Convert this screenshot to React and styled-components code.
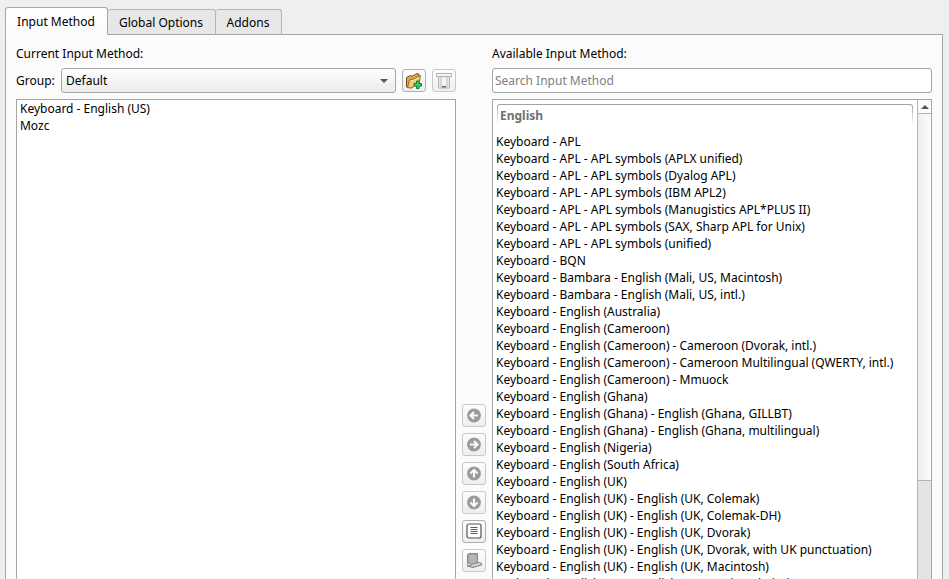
import React from 'react';
import styled, { createGlobalStyle } from 'styled-components';

const Global = createGlobalStyle`
  * { box-sizing: border-box; }
  html, body { margin: 0; height: 100%; overflow: hidden; background: #efefef; }
  body { font: 12px/17px "Noto Sans", sans-serif; color: #000; }
`;
const Window = styled.main`
  width: 949px; height: 579px; padding: 7px 6px 0 5px; overflow: hidden;
  display: flex; flex-direction: column; background: #efefef;
`;
const TabBar = styled.div`
  display: flex; align-items: flex-end; height: 28px; margin-bottom: -1px; z-index: 1;
`;
const Tab = styled.div`
  width: ${p => p.$w}px; height: ${p => (p.$active ? 28 : 26)}px;
  border: 1px solid ${p => (p.$active ? '#a6a6a6' : '#b4b4b4')};
  border-bottom-color: ${p => (p.$active ? '#fbfbfb' : '#a6a6a6')};
  border-left-width: ${p => (p.$active ? 1 : 0)}px;
  border-radius: 3px 3px 0 0;
  background: ${p => (p.$active ? 'linear-gradient(#fff, #fbfbfb)' : '#e7e7e7')};
  padding: ${p => (p.$active ? 5 : 4)}px 1px 0 0;
  text-align: center; white-space: nowrap;
`;
const Pane = styled.section`
  flex: 1; min-height: 0; border: 1px solid #a6a6a6; border-bottom: 0; background: #fbfbfb;
  padding: 10px 10px 0; display: grid; grid-template-columns: 440px 36px 440px;
`;
const Column = styled.div`
  display: flex; flex-direction: column; min-height: 0;
`;
const Label = styled.div`
  height: 17px; white-space: nowrap; margin-bottom: ${p => p.$gap || 0}px;
`;
const GroupRow = styled.div`
  display: flex; align-items: center; height: 25px; margin-bottom: 6px;
`;
const GroupLabel = styled.div`
  width: 45px;
`;
const Combo = styled.div`
  width: 335px; height: 25px; border: 1px solid #a6a6a6; border-radius: 3px;
  background: linear-gradient(#fefefe, #ebebeb); padding: 0 7px 0 4px; margin-right: 6px;
  display: flex; align-items: center; justify-content: space-between;
`;
const ToolButton = styled.div`
  width: 24px; height: 23px; margin-right: ${p => p.$gap || 0}px;
  border: 1px solid ${p => (p.$off ? '#c9c9c9' : '#b0b0b0')}; border-radius: 3px;
  background: linear-gradient(#fdfdfd, #eeeeee);
  display: flex; align-items: center; justify-content: center;
  svg { display: block; flex: none; }
`;
const Search = styled.div`
  height: 25px; border: 1px solid #a6a6a6; border-radius: 3px; background: #fff;
  padding: 3px 2px; color: #808080; margin-bottom: 6px;
`;
const ListBox = styled.div`
  flex: 1; min-height: 0; border: 1px solid #a6a6a6; border-bottom: 0; background: #fff;
  overflow: hidden; display: flex;
`;
const Items = styled.div`
  flex: 1; min-width: 0; overflow: hidden; padding-top: ${p => p.$top || 0}px;
`;
const Item = styled.div`
  height: 17px; padding-left: 3px; white-space: nowrap; letter-spacing: -0.01px;
`;
const Heading = styled.div`
  margin: 0 4px 8px; height: 21px; border-radius: 3px 3px 0 0; padding: 1px;
  background: linear-gradient(#a0a0a0, #fff);
`;
const HeadingText = styled.div`
  height: 20px; border-radius: 2px 2px 0 0; background: #fff; padding: 2px 0 0 2px;
  font-weight: 700; color: #707070;
`;
const Actions = styled.div`
  padding: 359px 0 0 6px; display: flex; flex-direction: column; gap: 6px;
`;
const Scrollbar = styled.div`
  width: 14px; border-left: 1px solid #b4b4b4; background: #e4e4e4;
  display: flex; flex-direction: column;
`;
const ScrollUp = styled.div`
  height: 14px; border-bottom: 1px solid #b4b4b4; background: #fbfbfb;
  display: flex; justify-content: center; align-items: center;
`;
const Thumb = styled.div`
  height: 367px; border-bottom: 1px solid #b4b4b4;
  background: linear-gradient(90deg, #eeeeee, #fcfcfc);
`;

const Folder = () => (
  <svg width="18" height="18" viewBox="0 0 18 18">
    <path d="M1.500 5.500 5.500 3.500l1.500.8L12 1.500l2 .8V11l-8 5-4.500-1z" fill="#d8a54a" stroke="#76541b" />
    <path d="M2.500 15.500 4.500 8l3.500-.5 7.500-4-1.500 8L6 16z" fill="#f4ca76" stroke="#8a6425" strokeWidth=".9" />
    <path d="m5.300 8.800 3-.5 6-3" fill="none" stroke="#fde6ae" />
    <path d="M11.500 9h2.500v2.500h2.500V14H14v2.500h-2.500V14H9v-2.500h2.500z" fill="#3ed06a" stroke="#157a35" />
  </svg>
);
const Bin = () => (
  <svg width="18" height="18" viewBox="0 0 18 18">
    <path d="M3.500 4.500h11v11.500h-11z" fill="#e9e9e9" stroke="#b4b4b4" />
    <path d="M1.500 1.500h15v3h-15z" fill="#f4f4f4" stroke="#b0b0b0" />
    <path d="M6 5v10M12 5v10" stroke="#c4c4c4" />
    <path d="M7.500 5.500h3v8h-3z" fill="#f7f7f7" />
    <path d="M7 14h4v1.500H7z" fill="#666" />
  </svg>
);
const Arrow = ({ angle }) => (
  <svg width="16" height="16" viewBox="0 0 16 16">
    <circle cx="8" cy="7.500" r="6.900" fill="#9b9b9b" />
    <path transform={`rotate(${angle} 8 7.500)`} d="M12 7.500H4.800M8 3.900 4.400 7.500 8 11.100" fill="none" stroke="#fafafa" strokeWidth="2.100" />
  </svg>
);
const Document = () => (
  <svg width="16" height="17" viewBox="0 0 16 17">
    <rect x="1" y="1" width="14" height="14" rx="2" fill="#fff" stroke="#555" strokeWidth="1.200" />
    <path d="M4.500 4.500h7M4.500 6.500h7M4.500 8.500h7M4.500 10.500h7" stroke="#5c5c5c" />
  </svg>
);
const Keyboard = () => (
  <svg width="18" height="18" viewBox="0 0 18 18">
    <path d="M2.500 2.500 4 1.500h8.500v10l-1.500 3H2.500z" fill="#a2a2a2" stroke="#8b8b8b" />
    <path d="M4.500 3h7v8h-7z" fill="#b5b5b5" />
    <path d="M2.500 12.500h5" stroke="#ddd" />
    <path d="M5 13 14 10.500l2.500.8v1.700L8 15.500 5 14.800z" fill="#c2c2c2" stroke="#858585" />
    <path d="m7 13.500 8-2" stroke="#e4e4e4" />
  </svg>
);

const available = [
  'APL', 'APL - APL symbols (APLX unified)', 'APL - APL symbols (Dyalog APL)',
  'APL - APL symbols (IBM APL2)', 'APL - APL symbols (Manugistics APL*PLUS II)',
  'APL - APL symbols (SAX, Sharp APL for Unix)', 'APL - APL symbols (unified)', 'BQN',
  'Bambara - English (Mali, US, Macintosh)', 'Bambara - English (Mali, US, intl.)',
  'English (Australia)', 'English (Cameroon)', 'English (Cameroon) - Cameroon (Dvorak, intl.)',
  'English (Cameroon) - Cameroon Multilingual (QWERTY, intl.)', 'English (Cameroon) - Mmuock',
  'English (Ghana)', 'English (Ghana) - English (Ghana, GILLBT)',
  'English (Ghana) - English (Ghana, multilingual)', 'English (Nigeria)',
  'English (South Africa)', 'English (UK)', 'English (UK) - English (UK, Colemak)',
  'English (UK) - English (UK, Colemak-DH)', 'English (UK) - English (UK, Dvorak)',
  'English (UK) - English (UK, Dvorak, with UK punctuation)',
  'English (UK) - English (UK, Macintosh)', 'English (UK) - English (UK, Macintosh, intl.)',
];

export default function App() {
  return (
    <Window>
      <Global />
      <TabBar>
        <Tab $active $w={103}>Input Method</Tab>
        <Tab $w={108}>Global Options</Tab>
        <Tab $w={66}>Addons</Tab>
      </TabBar>
      <Pane>
        <Column>
          <Label $gap={6}>Current Input Method:</Label>
          <GroupRow>
            <GroupLabel>Group:</GroupLabel>
            <Combo>
              Default
              <svg width="8" height="4" viewBox="0 0 8 4"><path d="M0 0h8L4 4z" fill="#555" /></svg>
            </Combo>
            <ToolButton $gap={6}><Folder /></ToolButton>
            <ToolButton $off><Bin /></ToolButton>
          </GroupRow>
          <ListBox>
            <Items>
              <Item>Keyboard - English (US)</Item>
              <Item>Mozc</Item>
            </Items>
          </ListBox>
        </Column>
        <Actions>
          <ToolButton $off><Arrow angle={0} /></ToolButton>
          <ToolButton $off><Arrow angle={180} /></ToolButton>
          <ToolButton $off><Arrow angle={90} /></ToolButton>
          <ToolButton $off><Arrow angle={270} /></ToolButton>
          <ToolButton><Document /></ToolButton>
          <ToolButton $off><Keyboard /></ToolButton>
        </Actions>
        <Column>
          <Label $gap={6}>Available Input Method:</Label>
          <Search>Search Input Method</Search>
          <ListBox>
            <Items $top={4}>
              <Heading><HeadingText>English</HeadingText></Heading>
              {available.map(name => <Item key={name}>Keyboard - {name}</Item>)}
            </Items>
            <Scrollbar>
              <ScrollUp>
                <svg width="8" height="4" viewBox="0 0 8 4"><path d="M0 4h8L4 0z" fill="#555" /></svg>
              </ScrollUp>
              <Thumb />
            </Scrollbar>
          </ListBox>
        </Column>
      </Pane>
    </Window>
  );
}
